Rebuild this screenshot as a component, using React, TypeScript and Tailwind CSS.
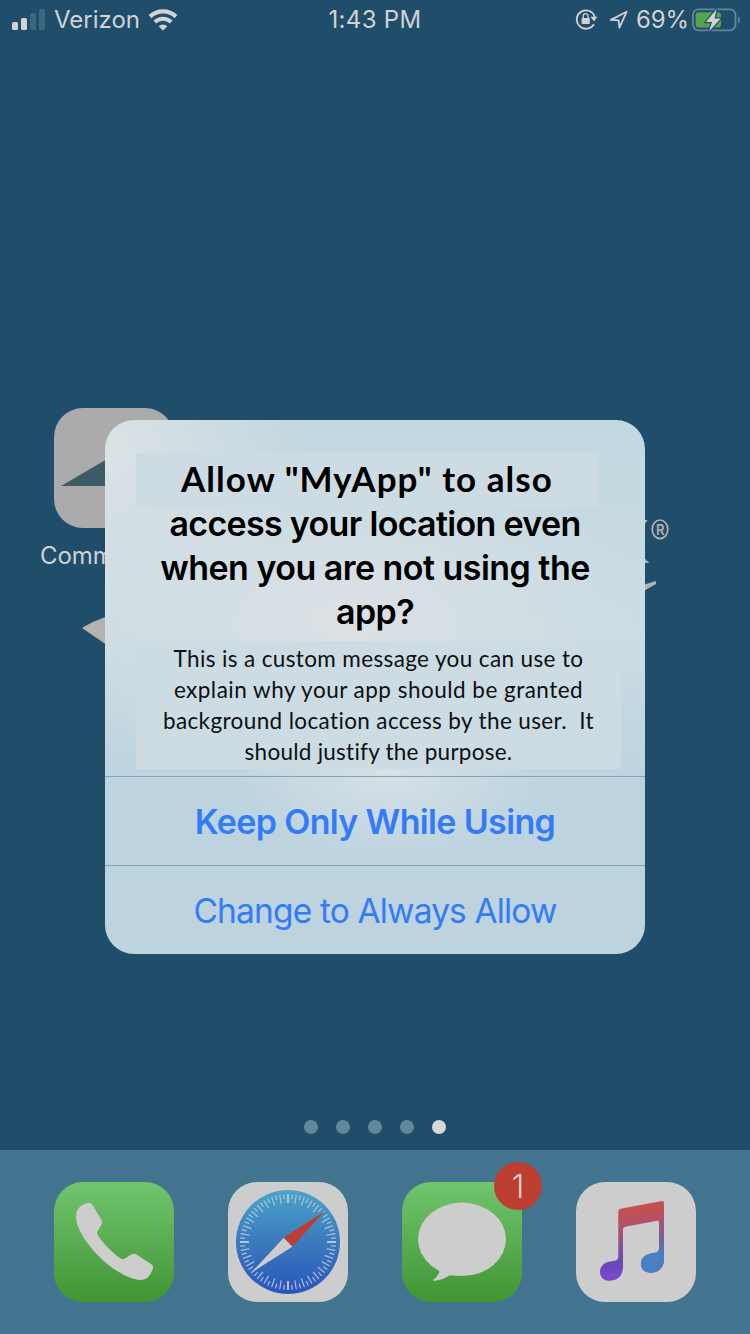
import React from "react";

function SignalBars() {
  return (
    <svg className="h-[22px] w-[34px]" viewBox="0 0 34 22">
      <rect x="0" y="13" width="6" height="8" rx="1.6" fill="#d2d2d2" />
      <rect x="9" y="9" width="6" height="12" rx="1.6" fill="#d2d2d2" />
      <rect x="18" y="4" width="6" height="17" rx="1.6" fill="#3c6781" />
      <rect x="27" y="0" width="6" height="21" rx="1.6" fill="#3c6781" />
    </svg>
  );
}

function Wifi() {
  return (
    <svg className="h-[22px] w-[30px]" viewBox="0 0 30 22">
      <path d="M2 7.6 A19 19 0 0 1 28 7.6" fill="none" stroke="#d2d2d2" strokeWidth="4.2" />
      <path d="M6.8 13 A12 12 0 0 1 23.2 13" fill="none" stroke="#d2d2d2" strokeWidth="4" />
      <path d="M10.6 17.2 A6.4 6.4 0 0 1 19.4 17.2 L15 21.6 Z" fill="#d2d2d2" />
    </svg>
  );
}

function RotationLock() {
  return (
    <svg className="h-[22px] w-[24px]" viewBox="0 0 24 22">
      <path d="M18.9 15.2 A9.2 9.2 0 1 1 19.8 8" fill="none" stroke="#d2d2d2" strokeWidth="1.8" />
      <path d="M15.4 7.8 H22.4 L19 12.4 Z" fill="#d2d2d2" />
      <rect x="6.6" y="8.9" width="8.2" height="6.2" rx="0.8" fill="#d2d2d2" />
      <path d="M8.3 9.3 V7.1 a2.4 2.4 0 0 1 4.8 0 V9.3" fill="none" stroke="#d2d2d2" strokeWidth="1.3" />
    </svg>
  );
}

function LocationArrow() {
  return (
    <svg className="h-[20px] w-[20px]" viewBox="0 0 20 20">
      <path d="M1.8 9.9 L17.7 1.7 L10.4 17.6 L9.6 10.4 Z" fill="none" stroke="#d2d2d2" strokeWidth="1.8" strokeLinejoin="round" />
    </svg>
  );
}

function Battery() {
  return (
    <svg className="h-[24px] w-[49px]" viewBox="0 0 49 24">
      <rect x="1" y="1.3" width="42.5" height="21" rx="5.5" fill="none" stroke="#668799" strokeWidth="1.8" />
      <path d="M46 8.5 c2.6 1.2 2.6 5.8 0 7 Z" fill="#668799" />
      <rect x="3.6" y="4.2" width="25.4" height="15.4" rx="3" fill="#52a650" />
      <path d="M24.5 1 L14 14 H20 L17 23.5 L28.8 10.5 H22.6 Z" fill="#d2d2d2" stroke="#204d6a" strokeWidth="2.4" paintOrder="stroke" />
    </svg>
  );
}

function StatusBar() {
  return (
    <header className="grid h-10 grid-cols-3 items-center text-[24px] leading-[40px] text-[#d2d2d2]">
      <div className="flex items-center pl-3">
        <SignalBars />
        <span className="ml-[8px]">Verizon</span>
        <span className="ml-2 flex"><Wifi /></span>
      </div>
      <div className="text-center tracking-[0.3px]">1:43 PM</div>
      <div className="flex items-center justify-end pr-[9px]">
        <RotationLock />
        <span className="ml-[10px] flex"><LocationArrow /></span>
        <span className="ml-[7px] mr-[3px] tracking-[-0.1px]">69%</span>
        <Battery />
      </div>
    </header>
  );
}

function Wallpaper() {
  return (
    <>
      <svg className="absolute left-[80px] top-[610px] h-10 w-10" viewBox="0 0 40 40">
        <path d="M2 18 Q12 11 40 2 V44 Z" fill="#b5b3b1" />
      </svg>
      <svg className="absolute left-[640px] top-[512px] h-[84px] w-[34px]" viewBox="0 0 34 84">
        <path d="M3 8 H7.6 L3 15 Z M3 45 L9.4 51 H3 Z M3 73 L16 69 V72 L3 79.5 Z" fill="#b5b3b1" />
        <ellipse cx="20" cy="17.3" rx="7.8" ry="9.3" fill="none" stroke="#b5b3b1" strokeWidth="1.7" />
        <text x="20.2" y="22.6" textAnchor="middle" fontSize="15" fontWeight="600" fill="#b5b3b1" textLength="8.5" lengthAdjust="spacingAndGlyphs">R</text>
      </svg>
    </>
  );
}

function HomeApp() {
  return (
    <div className="pl-[40px] pt-[368px]">
      <div className="ml-[14px] size-[120px] overflow-hidden rounded-[29px] bg-[#ababab]">
        <svg className="size-full" viewBox="0 0 120 120">
          <path d="M7 78 L60 47 L113 78 Z" fill="#3c5b64" />
        </svg>
      </div>
      <div className="mt-[12px] w-24 whitespace-nowrap text-[24px] leading-8 tracking-[-0.1px] text-[#d2d2d2]">Comm</div>
    </div>
  );
}

function Dialog() {
  return (
    <section className="absolute left-[105px] top-[420px] flex h-[534px] w-[540px] flex-col overflow-hidden rounded-[29px] bg-[#bed4df] bg-[radial-gradient(ellipse_320px_170px_at_240px_200px,#dce1e5_0%,#d7e0e5b3_40%,#d0dee400_100%),radial-gradient(ellipse_200px_200px_at_0px_30px,#dbe2e5_0%,#d0dfe500_100%),radial-gradient(ellipse_160px_90px_at_285px_350px,#d7e1e6_0%,#cbdae100_100%),linear-gradient(#c2d7e0,#cbdce3_40%,#bdd3df_68%,#bdd4df)] pt-[33px]">
      <h1 className="text-center text-[34px] font-semibold leading-[44px] text-black">
        <span className="ml-[31px] block h-[54px] w-[462px] bg-[#cddce3] font-['Lato'] text-[35px] font-bold leading-[51px] tracking-[1.05px]">Allow "MyApp" to also</span>
        <span className="relative -mt-[5px] block tracking-[-0.68px]">access your location even</span>
        <span className="block tracking-[-0.53px]">when you are not using the</span>
        <span className="block tracking-[-0.6px]">app?</span>
      </h1>
      <p className="ml-[31px] mt-[7px] h-[128px] w-[485px] whitespace-pre bg-[#cddce3] pt-[2px] text-center font-['Lato'] text-[22.5px] leading-[31px] text-[#0c1012]">
        <span className="block tracking-[0.37px]">This is a custom message you can use to</span>
        <span className="block tracking-[0.48px]">explain why your app should be granted</span>
        <span className="block tracking-[0.37px]">background location access by the user.  It</span>
        <span className="block tracking-[0.25px]">should justify the purpose.</span>
      </p>
      <button className="mt-[7px] h-[89px] border-t border-[#7fa5b8] pt-px text-[34px] font-semibold leading-[44px] tracking-[-0.64px] text-[#347bf7]">Keep Only While Using</button>
      <button className="h-[89px] border-t border-[#7fa5b8] pt-px text-[33.5px] leading-[44px] tracking-[-0.84px] text-[#347bf7]">Change to Always Allow</button>
    </section>
  );
}

const green = "size-[120px] rounded-[29px] bg-linear-to-b from-[#70c56e] to-[#429433]";

function Phone() {
  return (
    <div className={green}>
      <svg viewBox="0 0 120 120">
        <path d="M32.5 21.3 Q36.5 19.8 38.5 23 L47.2 37.5 Q49 40.5 47 43.5 L43.4 49.5 Q42.6 51.2 44 53.5 C49 61.5 58.5 70.5 66.3 76.3 Q68.5 78 71 76.6 L77.5 72.3 Q80 71 82.5 72.4 L97.5 82.3 Q100 84 98.6 87.5 C96 94.5 92.5 98 86.5 97.9 C75 97.5 58 87.5 45 74.5 C31 60.5 22 45 22 34.5 C22 27.5 26 23.5 32.5 21.3 Z" fill="#cdcdcd" />
      </svg>
    </div>
  );
}

function Safari() {
  const ticks = Array.from({ length: 72 }, (_, i) => i);
  return (
    <div className="size-[120px] rounded-[29px] bg-[#cdcdcd]">
      <svg viewBox="0 0 120 120">
        <defs>
          <linearGradient id="sky" x1="0" y1="0" x2="0" y2="1">
            <stop offset="0" stopColor="#49a4cb" />
            <stop offset="0.5" stopColor="#3b7abc" />
            <stop offset="1" stopColor="#2954bd" />
          </linearGradient>
        </defs>
        <circle cx="60" cy="60" r="52" fill="url(#sky)" />
        {ticks.map((i) => (
          <line key={i} x1="60" x2="60" y1="12" y2={i % 2 ? 17 : 21} stroke="#b4c5d6" strokeWidth={i % 18 ? 1.15 : 2} transform={`rotate(${i * 5} 60 60)`} />
        ))}
        <path d="M97 29 L55.7 55.7 L64.3 64.7 Z" fill="#bd3d30" />
        <path d="M23 91 L55.7 55.7 L64.3 64.7 Z" fill="#cdcdcd" />
      </svg>
    </div>
  );
}

function Messages() {
  return (
    <div className={"relative " + green}>
      <svg viewBox="0 0 120 120">
        <ellipse cx="60" cy="57.3" rx="44" ry="36.7" fill="#cdcdcd" />
        <path d="M34 85 Q39 88.5 36.5 92 Q34.5 95.5 31.3 97.7 Q30.8 99 33 98.7 Q41 97.8 47.5 93.2 L56 93.8 L50 80 Z" fill="#cdcdcd" />
      </svg>
      <span className="absolute -top-5 left-[92px] flex size-12 items-center justify-center rounded-full bg-[#bd3d30] pt-px text-[32px] font-light text-[#d8d4d4]">1</span>
    </div>
  );
}

function Music() {
  return (
    <div className="size-[120px] rounded-[29px] bg-[#cdcdcd]">
      <svg viewBox="0 0 120 120">
        <defs>
          <linearGradient id="tune" gradientUnits="userSpaceOnUse" x1="50" y1="28" x2="55" y2="90">
            <stop offset="0" stopColor="#c4504f" />
            <stop offset="0.35" stopColor="#a8517a" />
            <stop offset="0.85" stopColor="#6449b9" />
            <stop offset="1" stopColor="#7549c7" />
          </linearGradient>
          <linearGradient id="cool" gradientUnits="userSpaceOnUse" x1="85" y1="30" x2="82" y2="80">
            <stop offset="0" stopColor="#a8597c" stopOpacity="0" />
            <stop offset="0.45" stopColor="#805a95" />
            <stop offset="0.85" stopColor="#4980c2" />
          </linearGradient>
        </defs>
        <path d="M42.3 29.5 Q42.3 27.3 44.5 26.8 L86 19.1 Q88 18.8 88 21 V77 C88 86 82 90.8 74.8 90.8 C69 90.8 65 87.3 65 82 C65 76 69 72.5 75 71.4 L80.5 70.4 Q83 69.8 83 67 V40.5 Q83 38.3 81 38.7 L49.3 44.7 Q47 45.2 47 47.5 V85 C47 94 41 98.8 33.8 98.8 C28 98.8 24 95.3 24 90 C24 84 28 80.5 34 79.4 L39.8 78.4 Q42.3 77.8 42.3 75 Z" fill="url(#tune)" />
        <path d="M88 30 V77 C88 86 82 90.8 74.8 90.8 C69 90.8 65 87.3 65 82 C65 76 69 72.5 75 71.4 L80.5 70.4 Q83 69.8 83 67 V30 Z" fill="url(#cool)" />
      </svg>
    </div>
  );
}

function PageDots() {
  return (
    <div className="flex justify-center gap-[18px] pb-4">
      {[0, 1, 2, 3].map((i) => (
        <span key={i} className="size-[14px] rounded-full bg-[#63879a]" />
      ))}
      <span className="size-[14px] rounded-full bg-[#d8d8d8]" />
    </div>
  );
}

export default function App() {
  return (
    <div className="relative flex h-[1334px] w-[750px] flex-col overflow-hidden bg-[#204d6a] font-['Inter',sans-serif]">
      <StatusBar />
      <Wallpaper />
      <main className="flex-1">
        <HomeApp />
      </main>
      <PageDots />
      <nav className="flex h-[184px] justify-between bg-[#42738f] px-[54px] pt-8">
        <Phone />
        <Safari />
        <Messages />
        <Music />
      </nav>
      <Dialog />
    </div>
  );
}
